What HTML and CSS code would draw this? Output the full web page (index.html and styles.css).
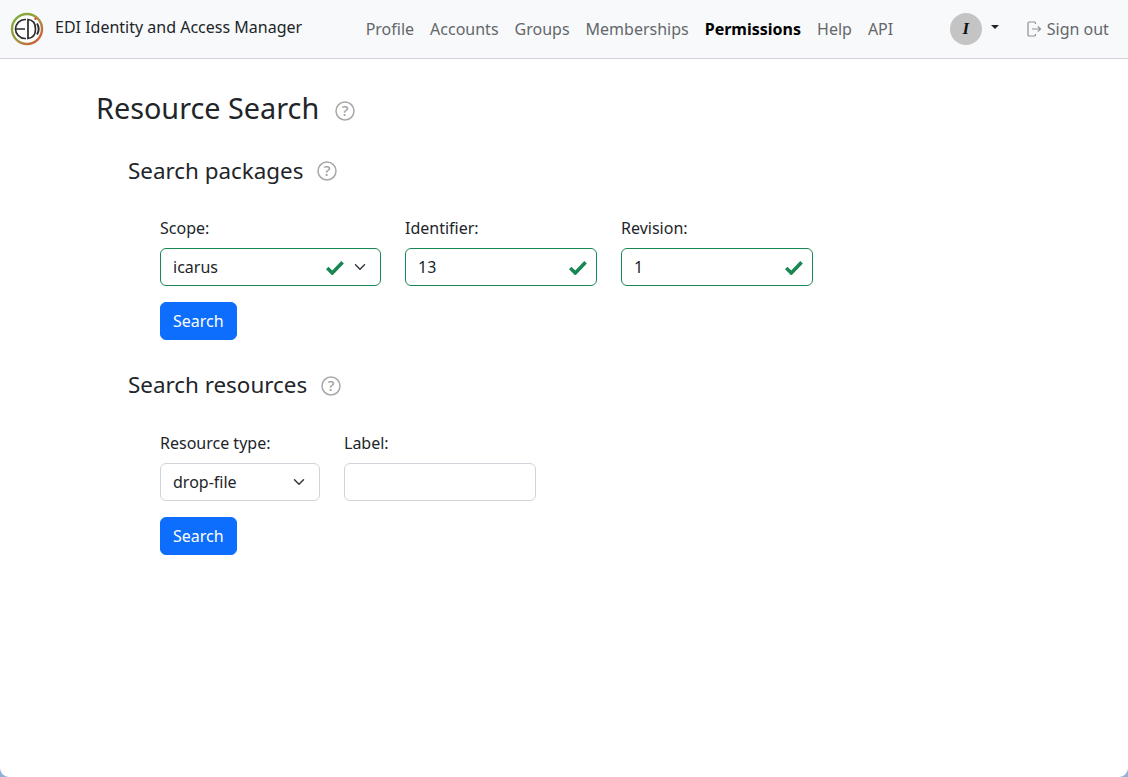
FILE: index.html
```html
<!DOCTYPE html>
<html>

<head>
  <meta charset="utf-8">
  <meta name="viewport" content="width=device-width">
  <title>Resource Search</title>

  <link rel="stylesheet" href="styles.css">
</head>

<body>
  <nav class="navbar">
    <a class="brand" href="#">
      <svg class="logo" width="34" height="34" viewBox="0 0 34 34">
        <defs>
          <linearGradient id="ring" x1="0" y1="0" x2="1" y2="1">
            <stop offset="0" stop-color="#79b33c"/>
            <stop offset="0.55" stop-color="#a5933f"/>
            <stop offset="1" stop-color="#dc4f38"/>
          </linearGradient>
        </defs>
        <circle cx="17" cy="17" r="15" fill="#fff" stroke="url(#ring)" stroke-width="2.4"/>
        <path d="M16 7.5H15A9.5 9.5 0 0 0 15 26.5H16M6.5 17H15" fill="none" stroke="#2b2b2b" stroke-width="1.7"/>
        <path d="M18 7.5C23.5 8 25.5 12 25.5 17S23.5 26 18 26.5Z" fill="none" stroke="#2b2b2b" stroke-width="1.7"/>
        <path d="M27 11.5C29.2 15 29.2 19 27 22.5" fill="none" stroke="#2b2b2b" stroke-width="1.9"/>
        <circle cx="25.5" cy="6.8" r="1.3" fill="#dc4f38"/>
      </svg>
      <span>EDI Identity and Access Manager</span>
    </a>
    <ul class="nav-links">
      <li><a href="#">Profile</a></li>
      <li><a href="#">Accounts</a></li>
      <li><a href="#">Groups</a></li>
      <li><a href="#">Memberships</a></li>
      <li><a class="active" href="#">Permissions</a></li>
      <li><a href="#">Help</a></li>
      <li><a href="#">API</a></li>
    </ul>
    <div class="user-menu">
      <span class="avatar">I</span>
      <span class="caret"></span>
    </div>
    <a class="sign-out" href="#">
      <svg width="16" height="16" viewBox="0 0 16 16" fill="none" stroke="#8d9196" stroke-width="1.2">
        <path d="M9.5 3V2.2A1.2 1.2 0 0 0 8.3 1H3.2A1.2 1.2 0 0 0 2 2.2V13.8A1.2 1.2 0 0 0 3.2 15H8.3A1.2 1.2 0 0 0 9.5 13.8V13"/>
        <path d="M6 8H14.5M11.8 5.3L14.5 8L11.8 10.7"/>
      </svg>
      <span>Sign out</span>
    </a>
  </nav>

  <main class="container">
    <div class="heading page-heading">
      <h1>Resource Search</h1>
      <svg class="help" width="20" height="20" viewBox="0 0 20 20"><circle cx="10" cy="10" r="9" /><text x="10" y="15.2" text-anchor="middle">?</text></svg>
    </div>

    <section class="section">
      <div class="heading">
        <h2>Search packages</h2>
        <svg class="help" width="20" height="20" viewBox="0 0 20 20"><circle cx="10" cy="10" r="9" /><text x="10" y="15.2" text-anchor="middle">?</text></svg>
      </div>
      <form class="search-form">
        <div class="fields">
          <div class="field scope">
            <label>Scope:</label>
            <div class="control valid">
              <span>icarus</span>
              <svg class="check" width="18" height="15" viewBox="0 0 18 15"><path d="M1.2 8L6.3 13L16.6 2.2" fill="none" stroke="#198754" stroke-width="3.6"/></svg>
              <svg class="chevron" width="12" height="12" viewBox="0 0 16 16"><path d="M2 5l6 6 6-6" fill="none" stroke="#343a40" stroke-width="2" stroke-linecap="round" stroke-linejoin="round"/></svg>
            </div>
          </div>
          <div class="field text-field">
            <label>Identifier:</label>
            <div class="control valid">
              <span>13</span>
              <svg class="check" width="18" height="15" viewBox="0 0 18 15"><path d="M1.2 8L6.3 13L16.6 2.2" fill="none" stroke="#198754" stroke-width="3.6"/></svg>
            </div>
          </div>
          <div class="field text-field">
            <label>Revision:</label>
            <div class="control valid">
              <span>1</span>
              <svg class="check" width="18" height="15" viewBox="0 0 18 15"><path d="M1.2 8L6.3 13L16.6 2.2" fill="none" stroke="#198754" stroke-width="3.6"/></svg>
            </div>
          </div>
        </div>
        <button class="btn" type="button">Search</button>
      </form>
    </section>

    <section class="section">
      <div class="heading">
        <h2>Search resources</h2>
        <svg class="help" width="20" height="20" viewBox="0 0 20 20"><circle cx="10" cy="10" r="9" /><text x="10" y="15.2" text-anchor="middle">?</text></svg>
      </div>
      <form class="search-form">
        <div class="fields">
          <div class="field type">
            <label>Resource type:</label>
            <div class="control">
              <span>drop-file</span>
              <svg class="chevron" width="12" height="12" viewBox="0 0 16 16"><path d="M2 5l6 6 6-6" fill="none" stroke="#343a40" stroke-width="2" stroke-linecap="round" stroke-linejoin="round"/></svg>
            </div>
          </div>
          <div class="field text-field">
            <label>Label:</label>
            <div class="control"></div>
          </div>
        </div>
        <button class="btn" type="button">Search</button>
      </form>
    </section>
  </main>
</body>

</html>
```

FILE: styles.css
```css
html {
  height: 100%;
  background-color: #8fb2dc;
}

body {
  margin: 0;
  height: 100%;
  overflow: hidden;
  background-color: #fff;
  border-radius: 0 0 9px 9px;
  font-family: "Noto Sans", sans-serif;
  font-size: 16px;
  line-height: 24px;
  color: #212529;
}

a {
  text-decoration: none;
}

.navbar {
  display: flex;
  align-items: center;
  height: 58px;
  padding-left: 10px;
  background-color: #f8f9fa;
  border-bottom: 1px solid #d3d4d9;
}

.brand {
  display: flex;
  align-items: center;
  gap: 11px;
  color: #212529;
}

.brand span {
  margin-top: -4px;
}

.logo {
  flex: none;
}

.nav-links {
  display: flex;
  gap: 16px;
  margin: 0 0 0 63.5px;
  padding: 0;
  list-style: none;
}

.nav-links a {
  color: #63676b;
}

.nav-links a.active {
  color: #000;
  font-weight: 700;
}

.user-menu {
  display: flex;
  align-items: center;
  margin-left: 56.5px;
}

.avatar {
  display: flex;
  align-items: center;
  justify-content: center;
  width: 32px;
  height: 32px;
  border-radius: 50%;
  background-color: #c4c4c4;
  font-family: "Liberation Serif", serif;
  font-size: 17px;
  font-weight: 700;
  font-style: italic;
  color: #111;
}

.caret {
  width: 0;
  height: 0;
  margin: -4px 0 0 9px;
  border-top: 4.8px solid #212529;
  border-left: 4.8px solid transparent;
  border-right: 4.8px solid transparent;
}

.sign-out {
  display: flex;
  align-items: center;
  gap: 5px;
  margin-left: 27px;
  color: #63676b;
}

.container {
  padding: 30px 0 0 96px;
}

.heading {
  display: flex;
  align-items: center;
}

.heading .help {
  margin-left: 14px;
}

.page-heading .help {
  margin-left: 16px;
  margin-top: 6px;
}

h1 {
  margin: 0;
  font-size: 28.8px;
  line-height: 38px;
  font-weight: 400;
}

h2 {
  margin: 0;
  font-size: 22.4px;
  line-height: 28px;
  font-weight: 400;
}

.help circle {
  fill: none;
  stroke: #a8a8a8;
  stroke-width: 1.5;
}

.help text {
  font-family: "Noto Sans", sans-serif;
  font-size: 15px;
  font-weight: 500;
  fill: #a0a0a0;
}

.section {
  padding-left: 32px;
  margin-top: 30px;
}

.section + .section {
  margin-top: 31px;
}

.section + .section .help {
  margin-top: 2px;
}

.search-form {
  padding: 31px 0 0 32px;
}

.section + .section .search-form {
  padding-top: 32px;
}

.fields {
  display: flex;
  gap: 24px;
}

.field label {
  display: block;
  margin-bottom: 8px;
}

.control {
  display: flex;
  align-items: center;
  height: 38px;
  box-sizing: border-box;
  padding: 0 12px;
  background-color: #fff;
  border: 1px solid #ced4da;
  border-radius: 6px;
}

.control span {
  flex: 1;
}

.control.valid {
  border-color: #198754;
}

.scope {
  width: 221px;
}

.type {
  width: 160px;
}

.text-field {
  width: 192px;
}

.check {
  flex: none;
}

.text-field .check {
  margin-right: -3px;
}

.chevron {
  flex: none;
  margin-left: 10px;
  margin-right: 2px;
}

.btn {
  display: block;
  height: 38px;
  margin-top: 16px;
  padding: 0 12px;
  border: 1px solid #0d6efd;
  border-radius: 6px;
  background-color: #0d6efd;
  font-family: inherit;
  font-size: 16px;
  color: #fff;
}
```
